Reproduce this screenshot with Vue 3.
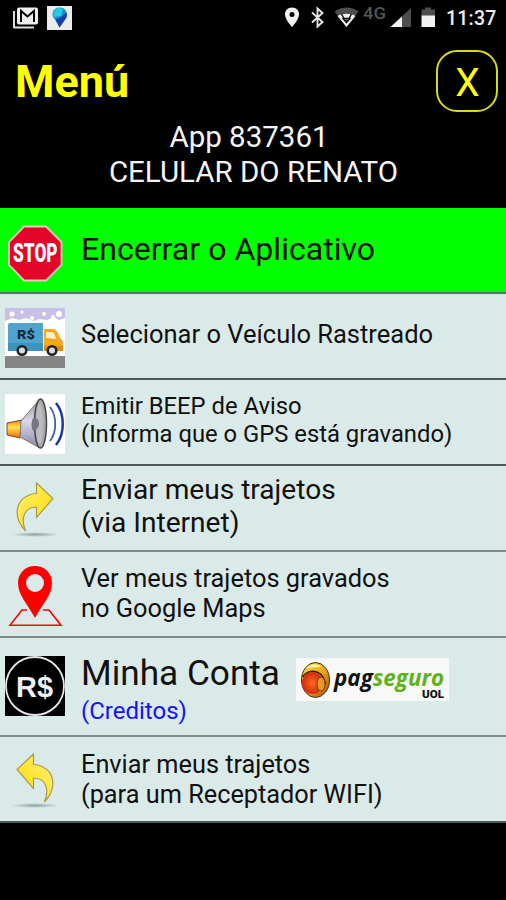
<script setup>
const rows = [
    { id: 'stop', lines: ['Encerrar o Aplicativo'] },
    { id: 'truck', lines: ['Selecionar o Veículo Rastreado'] },
    { id: 'beep', lines: ['Emitir BEEP de Aviso', '(Informa que o GPS está gravando)'] },
    { id: 'send', lines: ['Enviar meus trajetos', '(via Internet)'] },
    { id: 'maps', lines: ['Ver meus trajetos gravados', 'no Google Maps'] },
    { id: 'account', lines: ['Minha Conta', '(Creditos)'] },
    { id: 'wifi', lines: ['Enviar meus trajetos', '(para um Receptador WIFI)'] },
]
</script>

<template>
  <div class="phone">
    <div class="status">
      <svg class="status-left" width="62" height="25" viewBox="0 0 62 25">
        <path d="M2 6v16.500h20" fill="none" stroke="#ddd" stroke-width="2" stroke-linejoin="round" />
        <rect x="5" y="2.500" width="21" height="17" rx="2" fill="#eee" />
        <path d="M9 17V6l6.500 5.500L22 6v11" fill="none" stroke="#000" stroke-width="2" />
        <rect x="35" y="1" width="25" height="24" fill="#ececec" />
        <path d="M47.500 22.500l-4.500-8C38 10 41 2.500 47.500 2.500S57 9 53 14z" fill="#168fd0" />
        <path d="M43 5c2-3 7-3 8 0l-2 6-7 1c-1-2-1-5 1-7z" fill="#25cbe4" />
        <path d="M47.500 22.500l-4-8 5-2 6-5c1 3 0 6-2 8z" fill="#123fa8" />
      </svg>
      <div class="status-right">
        <svg width="155" height="24" viewBox="0 0 155 24">
          <path d="M7 2.500C2.500 2.500 0 5.500 0 9.500 0 14.500 7 22 7 22s7-7.500 7-12.500c0-4-2.500-7-7-7z" fill="#f2f2f2" />
          <circle cx="7" cy="9.500" r="2.500" fill="#000" />
          <path d="M27 7.500l10.500 9.500-5 4.500v-18l5 4.500L27 17.500" fill="none" stroke="#e6e6e6" stroke-width="1.900" />
          <path d="M49.500 6.500c7-5.500 17-5.500 24 0L61.500 22z" fill="#4d4d4d" />
          <path d="M52.500 11c5-3 13-3 18 0l-9 11z" fill="#f2f2f2" />
          <path d="M56.500 9l2.500 4.500h5L66.500 9M57.500 13l4 4.500 4-4.500M60 15.500h3" fill="none" stroke="#111" stroke-width="1.500" />
          <text x="78" y="14" class="net" textLength="23" lengthAdjust="spacingAndGlyphs">4G</text>
          <path d="M105.500 22L126 3v19z" fill="#4d4d4d" />
          <path d="M105.500 22L117 11.500V22z" fill="#f2f2f2" />
          <path d="M136.500 4.500h3.500v-2h6v2h4V11h-13.500z" fill="#4d4d4d" />
          <path d="M136.500 10.500H150V22h-13.500z" fill="#f2f2f2" />
        </svg>
        <span class="clock">11:37</span>
      </div>
    </div>

    <header>
      <h1>Menú</h1>
      <button class="close">X</button>
    </header>

    <div class="device">
      <p class="app-id">App 837361</p>
      <p class="app-name">CELULAR DO RENATO</p>
    </div>

    <ul class="menu">
      <li v-for="row in rows" :key="row.id" class="row" :class="row.id">
        <svg class="icon" width="60" height="60" viewBox="0 0 60 60">
          <g v-if="row.id === 'stop'">
            <path d="M19 2.500h22l15.500 15.500v23L41 56.500H19L4 41V18z" fill="#e3062a" stroke="#e9c8bd" stroke-width="1.800" />
            <text x="8" y="38" class="stop-text" textLength="44.500" lengthAdjust="spacingAndGlyphs">STOP</text>
          </g>
          <g v-else-if="row.id === 'truck'">
            <rect width="60" height="60" fill="#fff" />
            <path d="M0 0h60v10l-6 2-5-3-7 3-8-1-5 2-8-3-7 2-6-2-8 3z" fill="#c9c0e8" />
            <g fill="#fff"><circle cx="7" cy="6" r="2.500" /><circle cx="17" cy="4" r="1.500" /><circle cx="39" cy="6" r="2" /><circle cx="54" cy="6" r="3" /><circle cx="48" cy="9" r="2" /><circle cx="27" cy="10" r="2" /></g>
            <rect y="48" width="60" height="12" fill="#858585" />
            <path d="M5 15h33v28H5q-2 0-2-2V17q0-2 2-2z" fill="#4ea4cd" />
            <path d="M3 35h35v8H3z" fill="#3d93bf" />
            <path d="M39 21h8c4 0 6 3 8 9 2 1 3 3 3 6v7H39z" fill="#f3a81d" />
            <path d="M41 24h5c3 0 4 2 5 7l-10-1z" fill="#fff0c3" />
            <path d="M39 38h19v5H39z" fill="#de8a10" />
            <circle cx="17" cy="42.500" r="4.300" fill="#ddd" stroke="#222" stroke-width="2.500" />
            <circle cx="47" cy="42.500" r="4.300" fill="#ddd" stroke="#222" stroke-width="2.500" />
            <text x="12" y="31" class="truck-text" textLength="18" lengthAdjust="spacingAndGlyphs">R$</text>
          </g>
          <g v-else-if="row.id === 'beep'">
            <defs>
              <linearGradient id="cone" x1="0" x2="0" y1="0" y2="1"><stop offset="0" stop-color="#8e8e9c" /><stop offset=".45" stop-color="#d9d9e8" /><stop offset="1" stop-color="#8886a3" /></linearGradient>
              <linearGradient id="magnet" x1="0" x2="0" y1="0" y2="1"><stop offset="0" stop-color="#f47a16" /><stop offset=".4" stop-color="#ffe34c" /><stop offset="1" stop-color="#f06a08" /></linearGradient>
            </defs>
            <rect width="60" height="60" fill="#fff" />
            <path d="M2 29l15-3-2 18-13-3z" fill="url(#magnet)" stroke="#704b32" />
            <path d="M16 27L35 5v49L15 43z" fill="url(#cone)" stroke="#777" />
            <ellipse cx="35.500" cy="29.500" rx="6" ry="24.500" fill="#a8a8ad" stroke="#444" stroke-width="1.500" />
            <ellipse cx="34.500" cy="30" rx="3.500" ry="20" fill="#bcbcc0" />
            <path d="M28 24c7-2 9 11 0 13-2-4-2-9 0-13z" fill="#777782" />
            <path d="M45 13c7 9 7 25 0 34" fill="none" stroke="#41619c" stroke-width="1.800" />
            <path d="M51 9c9 11 9 31 0 42" fill="none" stroke="#1836a5" stroke-width="2.500" />
          </g>
          <g v-else-if="row.id === 'send' || row.id === 'wifi'">
            <defs>
              <linearGradient id="gold" x1="0" x2="1" y1="0" y2="1"><stop offset="0" stop-color="#fff27a" /><stop offset=".6" stop-color="#ffe32e" /><stop offset="1" stop-color="#e9bd20" /></linearGradient>
              <radialGradient id="shade"><stop offset="0" stop-color="#8fa09e" /><stop offset="1" stop-color="#8fa09e" stop-opacity="0" /></radialGradient>
            </defs>
            <ellipse cx="30" cy="54.500" rx="24" ry="2.500" fill="url(#shade)" />
            <path :transform="row.id === 'wifi' ? 'translate(60 0) scale(-1 1)' : ''" d="M31.500 3L48 18.500 31.500 37.500V27C20 27 15 37 20.500 51 9 39 9 22 23 15.500c3-1.500 5.500-2 8.500-2z" fill="url(#gold)" stroke="#a99a4b" stroke-width="1.200" />
          </g>
          <g v-else-if="row.id === 'maps'">
            <path d="M22 44h-5L5 59.300h51L44 44h-6" fill="none" stroke="#f5050a" stroke-width="1.700" />
            <path fill-rule="evenodd" d="M30 0C20 0 13 7.500 13 17c0 12 9 20 17 35 8-15 17-23 17-35C47 7.500 40 0 30 0zm0 8a9 9 0 1 1 0 18 9 9 0 0 1 0-18z" fill="#ff0000" />
          </g>
          <g v-else>
            <rect width="60" height="60" fill="#000" />
            <circle cx="30" cy="30" r="29" fill="none" stroke="#e8e8e8" stroke-width="1.800" />
            <text x="11" y="41" class="coin-text" textLength="37" lengthAdjust="spacingAndGlyphs">R$</text>
          </g>
        </svg>
        <div class="copy">
          <p v-for="line in row.lines" :key="line">{{ line }}</p>
        </div>
        <svg v-if="row.id === 'account'" class="pagseguro" width="153" height="43" viewBox="0 0 153 43">
          <defs>
            <linearGradient id="ball" x1="0" x2="1" y1="0" y2="1"><stop offset="0" stop-color="#f7e03a" /><stop offset=".5" stop-color="#e9a91b" /><stop offset="1" stop-color="#9b4b10" /></linearGradient>
            <radialGradient id="ember"><stop offset="0" stop-color="#ff6a1c" /><stop offset="1" stop-color="#d32b0c" /></radialGradient>
          </defs>
          <rect width="153" height="43" fill="#f7f8f8" />
          <ellipse cx="19.500" cy="22" rx="14" ry="17.500" fill="url(#ball)" stroke="#4b2b12" />
          <path d="M10 10q9-7 16-1-8 0-16 1z" fill="#fff3a0" />
          <ellipse cx="16.500" cy="25" rx="10.500" ry="11" fill="url(#ember)" />
          <path d="M6.500 19c4-6 12-8 18-3 3 3 4 6 5 10" fill="none" stroke="#33180c" stroke-width="1.500" />
          <ellipse cx="25" cy="26" rx="4" ry="7" fill="#ec9720" stroke="#7c370c" />
          <text x="38" y="27.500" class="brand" textLength="110" lengthAdjust="spacingAndGlyphs">pag<tspan fill="#5fb11a">seguro</tspan></text>
          <text x="126" y="40" class="uol" textLength="22" lengthAdjust="spacingAndGlyphs">UOL</text>
        </svg>
      </li>
    </ul>
  </div>
</template>

<style>
body {
    background: #000;
}
</style>

<style scoped>
.phone {
    width: 506px;
    height: 900px;
    overflow: hidden;
    background: #000;
    font-family: Roboto, "Liberation Sans", sans-serif;
}

h1, p, ul {
    margin: 0;
    padding: 0;
}

.status {
    display: flex;
    justify-content: space-between;
    height: 37px;
    padding: 5px 10px 0 12px;
    box-sizing: border-box;
}

.status-right {
    display: flex;
    gap: 6px;
}

.clock {
    width: 50px;
    color: #eee;
    font-size: 19.5px;
    font-weight: 500;
    line-height: 27px;
    letter-spacing: 0.2px;
    white-space: nowrap;
}

.net {
    fill: #555;
    font-size: 17px;
    font-weight: 500;
}

header {
    display: flex;
    justify-content: space-between;
    height: 82px;
    padding: 13px 8px 0 15px;
    box-sizing: border-box;
}

h1 {
    color: #ff0;
    font-size: 45px;
    font-weight: 700;
    line-height: 63px;
}

.close {
    width: 62px;
    height: 62px;
    padding: 5px 0 0 1px;
    border: 2px solid #d9d91c;
    border-radius: 21px;
    background: #000;
    color: #ff0;
    font-family: inherit;
    font-size: 39px;
    line-height: 1;
}

.device {
    height: 89px;
    padding-top: 1px;
    box-sizing: border-box;
    color: #f4f4f4;
    font-size: 29.5px;
    line-height: 35px;
    text-align: center;
    white-space: nowrap;
}

.app-id {
    padding-right: 8px;
}

.app-name {
    padding-left: 1px;
}

.menu {
    list-style: none;
}

.row {
    display: flex;
    height: 86px;
    padding-left: 5px;
    box-sizing: border-box;
    border-bottom: 2px solid #7f8b89;
    background: #d9eae8;
    color: #111;
}

.icon {
    flex: none;
    margin-top: 14px;
}

.copy {
    margin-left: 16px;
    white-space: nowrap;
}

.stop {
    background: #0f0;
    border-color: #42814b;
}

.stop .icon {
    margin-top: 16px;
}

.stop .copy {
    padding-top: 21px;
    font-size: 32.1px;
    line-height: 40px;
}

.truck {
    border-color: #4e5654;
}

.truck .copy {
    padding-top: 24px;
    font-size: 25.5px;
    line-height: 32px;
}

.beep {
    border-color: #4e5654;
}

.beep .copy {
    padding-top: 12px;
    font-size: 23.8px;
    line-height: 28px;
}

.send .copy {
    padding-top: 7px;
    font-size: 28.1px;
    line-height: 33px;
}

.maps .copy {
    padding-top: 12px;
    font-size: 25.4px;
    line-height: 29.5px;
}

.account {
    height: 99px;
}

.account .icon {
    margin-top: 18px;
}

.account .copy {
    padding-top: 15px;
    font-size: 35.2px;
    line-height: 40px;
}

.account .copy p + p {
    margin-top: 4px;
    color: #1414f0;
    font-size: 24px;
    line-height: 28px;
}

.wifi {
    border-color: #4e5654;
}

.wifi .copy {
    padding-top: 13px;
    font-size: 25.3px;
    line-height: 29.5px;
}

.pagseguro {
    flex: none;
    margin: 20px 0 0 16px;
}

.stop-text {
    fill: #fff;
    font-family: Roboto, sans-serif;
    font-size: 25px;
    font-weight: 900;
}

.truck-text {
    fill: #102b3a;
    font-size: 13px;
    font-weight: 900;
}

.coin-text {
    fill: #f1f1f1;
    font-family: "Liberation Sans", sans-serif;
    font-size: 30px;
    font-weight: 700;
}

.brand {
    fill: #111;
    font-family: "Open Sans", sans-serif;
    font-size: 23px;
    font-style: italic;
    font-weight: 700;
}

.uol {
    fill: #111;
    font-size: 10.5px;
    font-weight: 900;
}
</style>
